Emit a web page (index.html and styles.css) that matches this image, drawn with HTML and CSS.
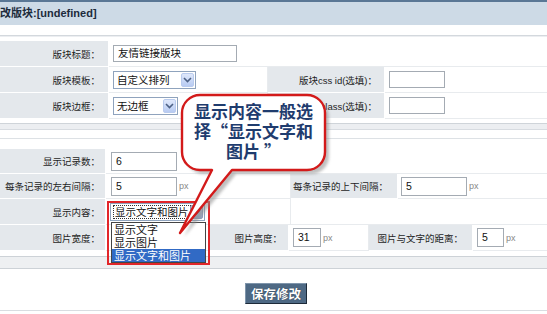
FILE: index.html
```html
<!DOCTYPE html>
<html>
<head>
<meta charset="utf-8">
<link rel="stylesheet" href="styles.css">
</head>
<body>
<div class="page">
  <div class="topbar"></div>
  <div class="title">改版块:[undefined]</div>
  <div class="rule-top"></div>

  <div class="table t1">
    <div class="row">
      <div class="lab w109">版块标题：</div>
      <div class="cell grow pl4"><div class="inp" style="width:124px">友情链接版块</div></div>
    </div>
    <div class="row">
      <div class="lab w109">版块模板：</div>
      <div class="cell w159 pl4"><div class="sel" style="width:83px"><span class="sel-t">自定义排列</span><span class="arr"><svg width="9" height="6" viewBox="0 0 9 6"><path d="M1 1 L4.5 4.5 L8 1" fill="none" stroke="#4d6185" stroke-width="1.6"/></svg></span></div></div>
      <div class="lab w117 pr7">版块css id(选填)：</div>
      <div class="cell grow pl4"><div class="inp" style="width:56px"></div></div>
    </div>
    <div class="row">
      <div class="lab w109">版块边框：</div>
      <div class="cell w159 pl4"><div class="sel" style="width:65px"><span class="sel-t">无边框</span><span class="arr"><svg width="9" height="6" viewBox="0 0 9 6"><path d="M1 1 L4.5 4.5 L8 1" fill="none" stroke="#4d6185" stroke-width="1.6"/></svg></span></div></div>
      <div class="lab w117 pr7">版块css class(选填)：</div>
      <div class="cell grow pl4"><div class="inp" style="width:56px"></div></div>
    </div>
  </div>

  <div class="divider"></div>

  <div class="table t2">
    <div class="spacer"></div>
    <div class="row">
      <div class="lab w106 pr5">显示记录数：</div>
      <div class="cell grow pl5"><div class="inp tall" style="width:66px">6</div></div>
    </div>
    <div class="row">
      <div class="lab w106 pr5">每条记录的左右间隔：</div>
      <div class="cell w185 pl5"><div class="inp tall" style="width:66px">5</div><span class="px">px</span></div>
      <div class="lab w107 pr9">每条记录的上下间隔：</div>
      <div class="cell grow pl3"><div class="inp tall" style="width:66px">5</div><span class="px">px</span></div>
    </div>
    <div class="row h26">
      <div class="lab w106 pr5">显示内容：</div>
      <div class="cell w185 pl4">
        <div class="sel focus" style="width:95px"><span class="sel-t"><span class="dotted">显示文字和图片</span></span><span class="arr dark"><svg width="9" height="6" viewBox="0 0 9 6"><path d="M1 1 L4.5 4.5 L8 1" fill="none" stroke="#3a4660" stroke-width="1.6"/></svg></span></div>
      </div>
      <div class="cell grow"></div>
    </div>
    <div class="row h26">
      <div class="lab w106 pr5">图片宽度：</div>
      <div class="cell w104"></div>
      <div class="lab w79 pr6">图片高度：</div>
      <div class="cell w80 pl4"><div class="inp tall" style="width:28px">31</div><span class="px">px</span></div>
      <div class="lab w104 pr9">图片与文字的距离：</div>
      <div class="cell grow pl4"><div class="inp tall" style="width:27px">5</div><span class="px">px</span></div>
    </div>
  </div>

  <div class="band"></div>
  <div class="actions"><button class="btn">保存修改</button></div>
  <div class="rule-bottom"></div>

  <div class="droplist">
    <div class="opt">显示文字</div>
    <div class="opt">显示图片</div>
    <div class="opt on">显示文字和图片</div>
  </div>
  <div class="redbox"></div>

  <div class="callout">
    <svg class="bubble" width="170" height="155" viewBox="0 0 170 155">
      <defs>
        <filter id="blur" x="-20%" y="-20%" width="140%" height="140%"><feGaussianBlur stdDeviation="1.6"/></filter>
      </defs>
      <path d="M30 7 H137 A18 18 0 0 1 155 25 V64 A18 18 0 0 1 137 82 H62 L10 145 L42 82 H30 A18 18 0 0 1 12 64 V25 A18 18 0 0 1 30 7 Z" transform="translate(4,4)" fill="#8a8a8a" opacity="0.55" filter="url(#blur)"/>
      <path d="M30 7 H137 A18 18 0 0 1 155 25 V64 A18 18 0 0 1 137 82 H62 L10 145 L42 82 H30 A18 18 0 0 1 12 64 V25 A18 18 0 0 1 30 7 Z" fill="#ffffff" stroke="#d31a1a" stroke-width="2.4" stroke-linejoin="round"/>
    </svg>
    <div class="callout-text">显示内容一般选<br>择“显示文字和<br>图片 ”</div>
  </div>
</div>
</body>
</html>
```

FILE: styles.css
```css
html, body { margin: 0; padding: 0; background: #fff; }
body { font-family: "Liberation Sans", "Noto Sans CJK SC", sans-serif; color: #222; }
.page { position: relative; width: 547px; height: 314px; overflow: hidden; }

.topbar { height: 2px; background: #5a7795; }
.title { height: 23px; line-height: 23px; background: #cddae6; font-size: 11px; font-weight: bold; color: #1c2b3c; white-space: nowrap; }
.rule-top { margin-top: 10px; height: 1px; background: #d3d8dd; border-bottom: 1px solid #eceef1; margin-bottom: 4px; }

.table { display: flex; flex-direction: column; }
.row { display: flex; height: 26px; }
.row.h26 { height: 26px; }
.t2 .row { height: 25px; }
.t2 .row.h26 { height: 26px; }
.spacer { height: 10px; }

.lab, .cell { box-sizing: border-box; height: 100%; display: flex; align-items: center; font-size: 9.5px; white-space: nowrap; }
.lab { background: #e4e8ec; justify-content: flex-end; padding-right: 8px; border-right: 1px solid #fff; border-bottom: 1px solid #fff; color: #1e1e1e; }
.cell { background: #fff; border-right: 1px solid #e8ebee; border-bottom: 1px solid #e8ebee; }
.grow { flex: 1; border-right: none; }

.w109 { width: 109px; } .w159 { width: 159px; } .w117 { width: 117px; }
.w106 { width: 106px; } .w185 { width: 185px; } .w107 { width: 107px; }
.w104 { width: 104px; } .w79 { width: 79px; } .w80 { width: 80px; }
.pr5 { padding-right: 5px; } .pr6 { padding-right: 6px; } .pr7 { padding-right: 7px; } .pr9 { padding-right: 9px; }
.pl3 { padding-left: 3px; } .pl4 { padding-left: 4px; } .pl5 { padding-left: 5px; }

.inp { box-sizing: border-box; height: 17px; border: 1px solid #a4abb3; background: #fff; font-size: 10.5px; line-height: 15px; padding-left: 4px; color: #111; }
.inp.tall { height: 19px; line-height: 17px; }
.px { font-size: 9px; color: #888; margin-left: 2px; }

.sel { box-sizing: border-box; height: 18px; border: 1px solid #8fa3bd; background: #fff; display: flex; align-items: center; justify-content: space-between; padding: 0 1px 0 3px; font-size: 10.5px; color: #111; }
.sel-t { line-height: 14px; }
.arr { width: 13px; height: 14px; box-sizing: border-box; border: 1px solid #b9cbee; border-radius: 2px; background: linear-gradient(#dfe8fb, #b8cbf2); display: flex; align-items: center; justify-content: center; }
.arr.dark { background: linear-gradient(#c6cfe0, #97a6c4); border-color: #8f9dbb; }
.dotted { outline: 1px dotted #333; outline-offset: 0; padding: 0 1px; }

.divider { margin-top: 4px; height: 5px; border-top: 1px solid #cfd4d9; border-bottom: 1px solid #d7dbe0; background: #eceef1; margin-bottom: 8px; }
.t2 { border-top: 1px solid #dde1e5; }

.band { margin-top: 5px; height: 11px; border-top: 1px solid #cdd2d7; border-bottom: 1px solid #cdd2d7; background: #eef0f2; }
.actions { display: flex; justify-content: center; padding: 14px 0 0 5px; height: 27px; }
.btn { box-sizing: border-box; width: 62px; height: 21px; padding: 0; border: 1px solid; border-color: #7f95ab #1d2a38 #1d2a38 #7f95ab; background: #4e6984; color: #fff; font-family: "Noto Sans CJK SC", sans-serif; font-size: 12.5px; font-weight: bold; line-height: 19px; text-shadow: 0 0 1px #1b2733; }
.rule-bottom { height: 1px; background: #d9dde1; }

.droplist { position: absolute; left: 111px; top: 222px; width: 95px; box-sizing: border-box; border: 1px solid #444; background: #fff; font-family: "Noto Sans CJK SC", sans-serif; font-size: 11px; }
.opt { height: 13px; line-height: 13px; padding-left: 2px; color: #111; }
.opt.on { background: #316ac5; color: #fff; }
.redbox { position: absolute; left: 107px; top: 201px; width: 103px; height: 64px; box-sizing: border-box; border: 2px solid #e2262a; }

.callout { position: absolute; left: 170px; top: 88px; width: 170px; height: 155px; }
.bubble { position: absolute; left: 0; top: 0; }
.callout-text { position: absolute; left: 12px; top: 13px; width: 143px; text-align: center; font-family: "Noto Sans CJK SC", sans-serif; font-size: 17px; font-weight: bold; line-height: 20px; color: #1f3c6e; white-space: nowrap; }
```
